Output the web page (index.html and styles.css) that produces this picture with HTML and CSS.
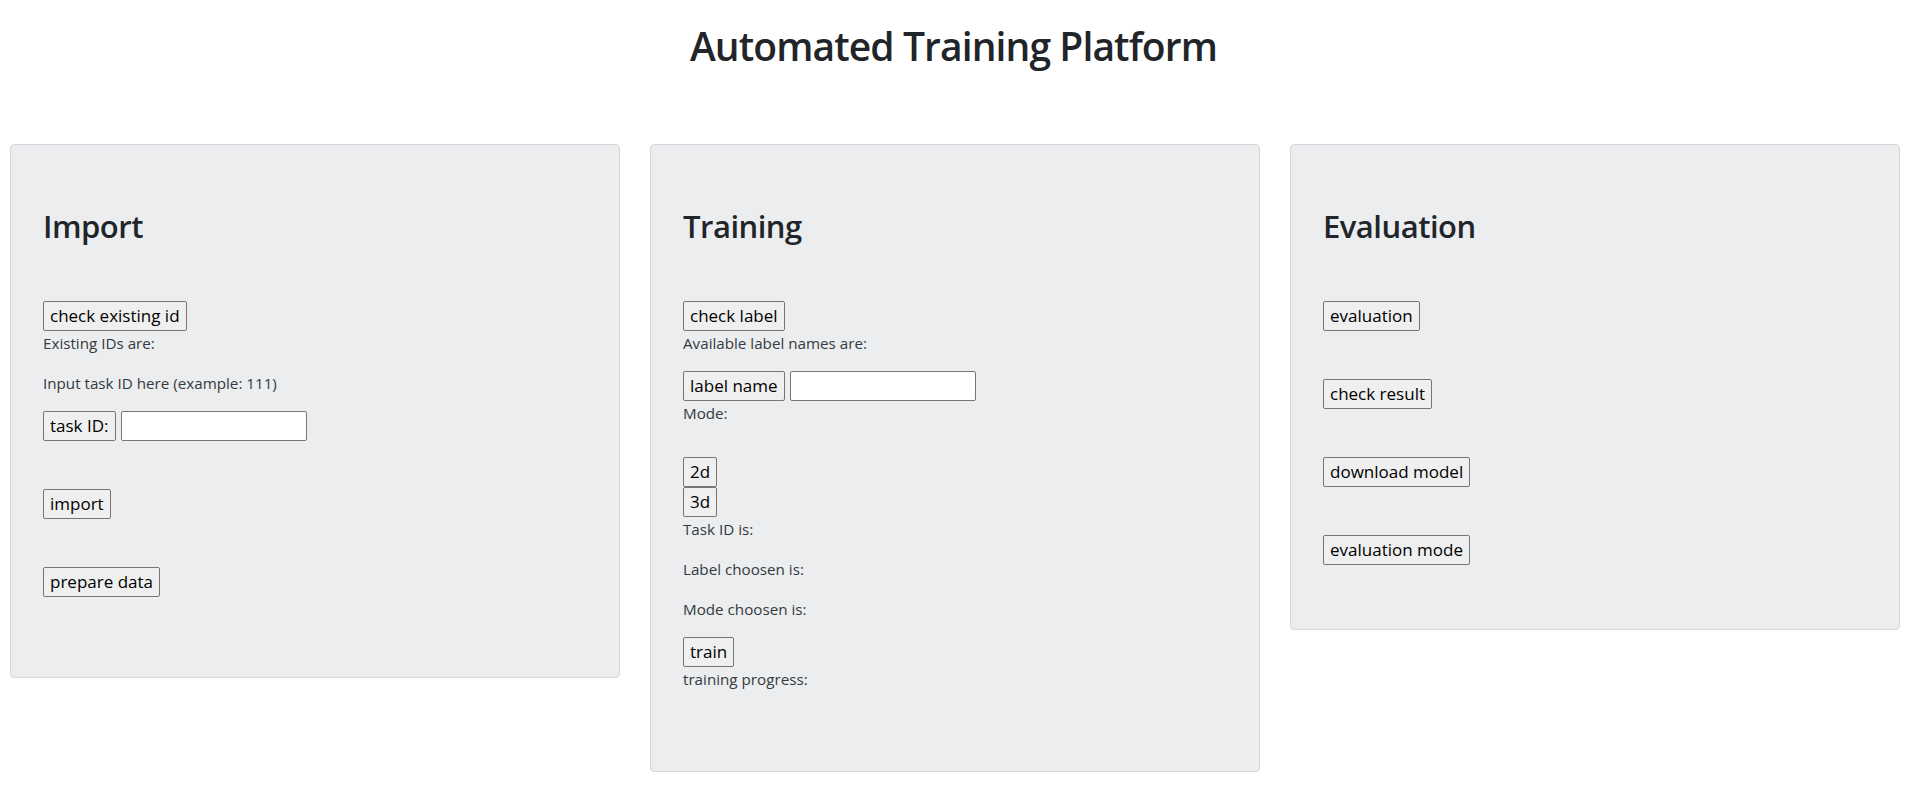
FILE: index.html
```html
<!DOCTYPE html>
<html lang="en">
<head>
<meta charset="utf-8">
<title>Automated Training Platform</title>
<link rel="stylesheet" href="styles.css">
</head>
<body>
<header class="page-header">
  <h1 class="page-title">Automated Training Platform</h1>
</header>
<main class="panels">
  <section class="panel">
    <h2 class="panel-title">Import</h2>
    <button class="btn">check existing id</button>
    <p class="note">Existing IDs are:</p>
    <p class="note">Input task ID here (example: 111)</p>
    <div class="field-row">
      <button class="btn">task ID:</button>
      <input class="text-input" type="text">
    </div>
    <button class="btn spaced">import</button>
    <button class="btn spaced tail">prepare data</button>
  </section>
  <section class="panel">
    <h2 class="panel-title">Training</h2>
    <button class="btn">check label</button>
    <p class="note">Available label names are:</p>
    <div class="field-row">
      <button class="btn">label name</button>
      <input class="text-input" type="text">
    </div>
    <p class="note note-wide">Mode:</p>
    <button class="btn">2d</button>
    <button class="btn">3d</button>
    <p class="note">Task ID is:</p>
    <p class="note">Label choosen is:</p>
    <p class="note">Mode choosen is:</p>
    <button class="btn">train</button>
    <p class="note">training progress:</p>
  </section>
  <section class="panel">
    <h2 class="panel-title">Evaluation</h2>
    <button class="btn">evaluation</button>
    <button class="btn spaced">check result</button>
    <button class="btn spaced">download model</button>
    <button class="btn spaced">evaluation mode</button>
  </section>
</main>
</body>
</html>
```
FILE: styles.css
```css
html, body {
  margin: 0;
  padding: 0;
  background: #ffffff;
}

body {
  font-family: "Open Sans", "Noto Sans", sans-serif;
  color: #212529;
}

.page-header {
  padding-top: 22px;
}

.page-title {
  margin: 0 0 74px;
  font-size: 39px;
  line-height: 48px;
  font-weight: 600;
  letter-spacing: -0.9px;
  text-align: center;
  color: #212529;
}

.panels {
  display: grid;
  grid-template-columns: repeat(3, 610px);
  column-gap: 30px;
  padding: 0 10px;
  align-items: start;
}

.panel {
  box-sizing: border-box;
  background: #ecedef;
  border: 1px solid #d5d7da;
  border-radius: 4px;
  padding: 64px 32px;
}

.panel-title {
  margin: 0 0 58px;
  font-size: 31px;
  line-height: 34px;
  font-weight: 600;
  letter-spacing: -0.5px;
  color: #212529;
}

.btn {
  display: block;
  box-sizing: border-box;
  height: 30px;
  margin: 0;
  padding: 2px 6px;
  font-family: "Open Sans", "Noto Sans", sans-serif;
  font-size: 17px;
  line-height: 24px;
  color: #000000;
  background: #efefef;
  border: 1px solid #767676;
  border-radius: 2px;
}

.field-row .btn {
  display: inline-block;
}

.spaced {
  margin-top: 48px;
}

.tail {
  margin-bottom: 16px;
}

.note {
  margin: 0 0 16px;
  font-size: 15.2px;
  line-height: 24px;
  color: #343a40;
}

.note-wide {
  margin-bottom: 32px;
}

.field-row {
  display: flex;
  align-items: center;
  gap: 5px;
}

.text-input {
  box-sizing: border-box;
  width: 186px;
  height: 30px;
  margin: 0;
  padding: 1px 2px;
  background: #ffffff;
  border: 1px solid #767676;
  border-radius: 2px;
  font-family: "Open Sans", "Noto Sans", sans-serif;
  font-size: 16px;
}
```
